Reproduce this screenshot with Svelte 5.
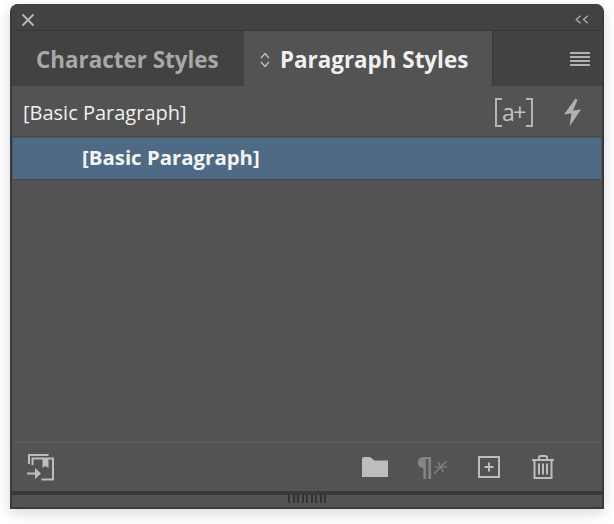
<script lang="ts">
    // Paragraph Styles panel, docked look
    const styleName = "[Basic Paragraph]";
    const gripMarks = Array.from({ length: 9 });
</script>

<div class="page">
    <div class="panel">
        <div class="titlebar">
            <svg class="close" width="14" height="14" viewBox="0 0 14 14" aria-label="Close">
                <path d="M1.5 1.5 12.5 12.5M12.5 1.5 1.5 12.5" />
            </svg>
            <svg class="collapse" width="14" height="9" viewBox="0 0 14 9" aria-label="Collapse">
                <path d="M5.5 .8 1.2 4.5 5.5 8.2M12.8 .8 8.5 4.5 12.8 8.2" />
            </svg>
        </div>

        <div class="tabs">
            <div class="tab">Character Styles</div>
            <div class="tab active">
                <svg width="12" height="18" viewBox="0 0 12 18">
                    <path d="M2 7 6 2.500 10 7M2 11 6 15.500 10 11" />
                </svg>
                Paragraph Styles
            </div>
            <div class="tab-rest">
                <div class="menu"><i></i><i></i><i></i><i></i></div>
            </div>
        </div>

        <div class="current">
            <span class="current-name">{styleName}</span>
            <span class="actions">
                <span class="clear"><i class="bracket left"></i>a+<i class="bracket right"></i></span>
                <svg width="20" height="29" viewBox="0 0 20 29" aria-label="Quick apply">
                    <path class="bolt" d="M12.500 .5 1 16.500 8.500 15.500 6.500 28.500 18 11.500 10 12.500 14.500 2Z" />
                </svg>
            </span>
        </div>

        <div class="list">
            <div class="row">{styleName}</div>
        </div>

        <div class="footer">
            <svg width="28" height="28" viewBox="0 0 28 28" aria-label="Load styles">
                <path class="line" d="M3 11V2H22.500M6.500 9V5.500H27V26.500H15.500M6.500 9V12" />
                <path class="fill" d="M16.500 5.500H22.500V15L19.500 13 16.500 15Z" />
                <path class="line" d="M1 20.500H10" />
                <path class="fill" d="M9 15 15 20.500 9 26Z" />
            </svg>
            <div class="footer-right">
                <svg width="26" height="20" viewBox="0 0 26 20" aria-label="New group">
                    <path class="fill" d="M0 2Q0 0 2 0H8L12.500 3.500H26V20H0Z" />
                </svg>
                <span class="clear-override">
                    <span class="pilcrow">¶</span>
                    <svg width="15" height="15" viewBox="0 0 15 15">
                        <path d="M1 14 13.500 1M1.500 7H14.500M5 2 10.500 12.500" />
                    </svg>
                </span>
                <svg width="22" height="22" viewBox="0 0 22 22" aria-label="New style">
                    <path class="line" d="M1 1H21V21H1Z M11 6.500V15.500M6.500 11H15.500" />
                </svg>
                <svg class="trash" width="22" height="24" viewBox="0 0 22 24" aria-label="Delete">
                    <path class="line" d="M0 5H22M7 5V2.500Q7 1 8.500 1H13.500Q15 1 15 2.500V5M2.500 5V23H19.500V5M7 8.500V19.500M11 8.500V19.500M15 8.500V19.500" />
                </svg>
            </div>
        </div>

        <div class="grip">
            {#each gripMarks as _}
                <i></i>
            {/each}
        </div>
    </div>
</div>

<style>
    :global(body) {
        background: #ffffff;
    }

    .page {
        height: 524px;
        padding: 4px 0 0 10px;
        box-sizing: border-box;
        overflow: hidden;
    }

    .panel {
        box-sizing: border-box;
        width: 594px;
        height: 505px;
        display: flex;
        flex-direction: column;
        background: #535353;
        border: solid #3a3a3a;
        border-width: 0 2px 2px 2px;
        border-radius: 8px 8px 0 0;
        box-shadow: 0 4px 14px rgba(0, 0, 0, 0.16);
        font-family: "Open Sans", sans-serif;
        overflow: hidden;
    }

    .titlebar {
        flex: 0 0 27px;
        display: flex;
        align-items: center;
        justify-content: space-between;
        padding: 5px 13px 0 9px;
        box-sizing: border-box;
        background: #424242;
        border-bottom: 1px solid #383838;
    }

    .titlebar svg path {
        fill: none;
        stroke: #b4b4b4;
    }

    .close path {
        stroke-width: 2;
    }

    .collapse path {
        stroke-width: 1.2;
    }

    .tabs {
        flex: 0 0 55px;
        display: flex;
    }

    .tab {
        width: 232px;
        padding: 2px 0 0 24px;
        box-sizing: border-box;
        display: flex;
        align-items: center;
        background: #424242;
        color: #a8a8a8;
        font-size: 22.4px;
        font-weight: 700;
    }

    .tab.active {
        width: 248px;
        padding-left: 15px;
        gap: 9px;
        background: #535353;
        color: #f0f0f0;
    }

    .tab.active svg path {
        fill: none;
        stroke: #c4c4c4;
        stroke-width: 1.2;
    }

    .tab-rest {
        flex: 1;
        display: flex;
        align-items: center;
        justify-content: flex-end;
        padding-right: 12px;
        background: #424242;
        border-left: 1px solid #383838;
    }

    .menu {
        width: 20px;
        display: flex;
        flex-direction: column;
        gap: 2px;
    }

    .menu i {
        height: 2px;
        background: #b0b0b0;
    }

    .current {
        flex: 0 0 50px;
        display: flex;
        align-items: center;
        justify-content: space-between;
        padding: 2px 19px 0 11px;
        box-sizing: border-box;
        color: #f0f0f0;
    }

    .current-name {
        font-size: 20px;
        font-weight: 500;
    }

    .actions {
        display: flex;
        align-items: center;
        gap: 30px;
    }

    .clear {
        display: flex;
        align-items: center;
        height: 26px;
        color: #c4c4c4;
        font-size: 23px;
        font-weight: 400;
        letter-spacing: -1.5px;
    }

    .bracket {
        width: 5px;
        height: 25px;
        border: solid #b4b4b4;
        border-width: 2px 0;
    }

    .bracket.left {
        border-left-width: 2px;
    }

    .bracket.right {
        margin-left: 1px;
        border-right-width: 2px;
    }

    .bolt {
        fill: #b0b0b0;
    }

    .fill {
        fill: #bdbdbd;
    }

    .line {
        fill: none;
        stroke: #bdbdbd;
        stroke-width: 2;
    }

    .list {
        flex: 1;
        margin: 0 1px;
        padding-top: 1px;
        border-top: 1px solid #484848;
        border-bottom: 2px solid #5a5a5a;
    }

    .row {
        height: 42px;
        box-sizing: border-box;
        padding: 0 0 3px 69px;
        display: flex;
        align-items: center;
        background: #4f6a84;
        border-bottom: 1px solid #484848;
        color: #f4f4f4;
        font-size: 20.4px;
        font-weight: 700;
    }

    .footer {
        flex: 0 0 48px;
        display: flex;
        align-items: center;
        justify-content: space-between;
        padding: 0 48px 0 14px;
        box-sizing: border-box;
    }

    .footer-right {
        display: flex;
        align-items: center;
        gap: 28px;
    }

    .clear-override {
        display: flex;
        align-items: center;
        gap: 1px;
        width: 34px;
        color: #858585;
    }

    .pilcrow {
        font-family: "DejaVu Sans", sans-serif;
        font-size: 27px;
        font-weight: 700;
        line-height: 1;
    }

    .clear-override svg {
        flex: none;
        margin-left: -1px;
    }

    .clear-override svg path {
        fill: none;
        stroke: #858585;
        stroke-width: 1.2;
    }

    .trash {
        margin-left: 4px;
    }

    .grip {
        flex: 0 0 12px;
        border-top: 4px solid #393939;
        display: flex;
        justify-content: center;
        gap: 2.500px;
    }

    .grip i {
        width: 2px;
        height: 8px;
        background: #333333;
    }
</style>
